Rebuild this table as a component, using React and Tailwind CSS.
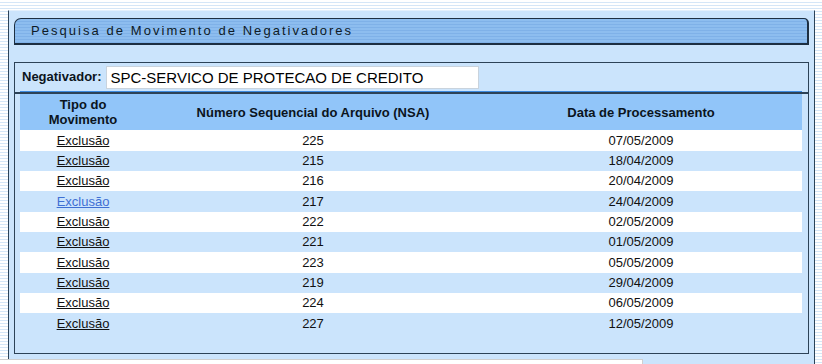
const rows = [
  { nsa: '225', data: '07/05/2009' },
  { nsa: '215', data: '18/04/2009' },
  { nsa: '216', data: '20/04/2009' },
  { nsa: '217', data: '24/04/2009', visited: true },
  { nsa: '222', data: '02/05/2009' },
  { nsa: '221', data: '01/05/2009' },
  { nsa: '223', data: '05/05/2009' },
  { nsa: '219', data: '29/04/2009' },
  { nsa: '224', data: '06/05/2009' },
  { nsa: '227', data: '12/05/2009' },
];

export default function App() {
  return (
    <div className="relative w-[822px] h-[364px] overflow-hidden bg-[repeating-linear-gradient(to_bottom,#ffffff_0px,#ffffff_2px,#d5e6f7_2px,#d5e6f7_3px)] font-['Liberation_Sans',Arial,sans-serif] text-[#111]">
      {/* outer panel */}
      <div className="ml-[8px] mt-[10px] w-[807px] h-[400px] border-l border-r border-t border-l-[#2c4257] border-r-[#2c4257] border-t-[#e2effc] bg-[#cbe4fc] pt-[7px] px-[5px]">

        {/* title bar */}
        <div className="h-[27px] flex items-center pl-[16px] border-t border-l border-r-2 border-b-2 border-[#1d2f42] rounded-tl-[7px] rounded-tr-[5px] bg-[repeating-linear-gradient(to_bottom,#8dbdef_0px,#8dbdef_2px,#7fb1e8_2px,#7fb1e8_3px)]">
          <span className="text-[13px] tracking-[2.05px] text-[#0e1a26]">
            Pesquisa de Movimento de Negativadores
          </span>
        </div>

        {/* content box */}
        <div className="mt-[17px] h-[292px] border border-[#2c4257]">
          <div className="h-[28px] flex items-center pl-[7px] gap-[5px]">
            <span className="text-[13px] font-bold text-[#0b1420]">Negativador:</span>
            <div className="w-[373px] h-[23px] bg-white border border-[#c9d3dd] flex items-center pl-[3px] text-[15px] text-black leading-none">
              SPC-SERVICO DE PROTECAO DE CREDITO
            </div>
          </div>
          <div className="ml-[5px] mr-[6px] h-[1px] bg-[#3c8ae0]" />
          <div className="h-[2px] bg-[#2c4257]" />

          <div className="ml-[5px] mr-[6px] text-[13px]">
            <div className="grid grid-cols-[126px_334px_322px] h-[36px] bg-[#91c5f9] font-bold text-[#0b1420] leading-[15px] items-center text-center">
              <div>Tipo do<br />Movimento</div>
              <div>Número Sequencial do Arquivo (NSA)</div>
              <div>Data de Processamento</div>
            </div>
            {rows.map((r, i) => (
              <div
                key={i}
                className={`grid grid-cols-[126px_334px_322px] items-center text-center ${i % 3 === 0 ? 'h-[21px]' : 'h-[20px]'} ${i % 2 === 0 ? 'bg-white' : 'bg-[#cbe4fc]'}`}
              >
                <div>
                  <span className={`underline ${r.visited ? 'text-[#3f6fd3]' : 'text-[#111]'}`}>Exclusão</span>
                </div>
                <div>{r.nsa}</div>
                <div>{r.data}</div>
              </div>
            ))}
          </div>
        </div>
      </div>

      {/* bottom overlay strip */}
      <div className="absolute left-0 top-[359px] w-[643px] h-[10px] bg-white border-t border-r border-[#cfcfcf]" />
    </div>
  );
}
